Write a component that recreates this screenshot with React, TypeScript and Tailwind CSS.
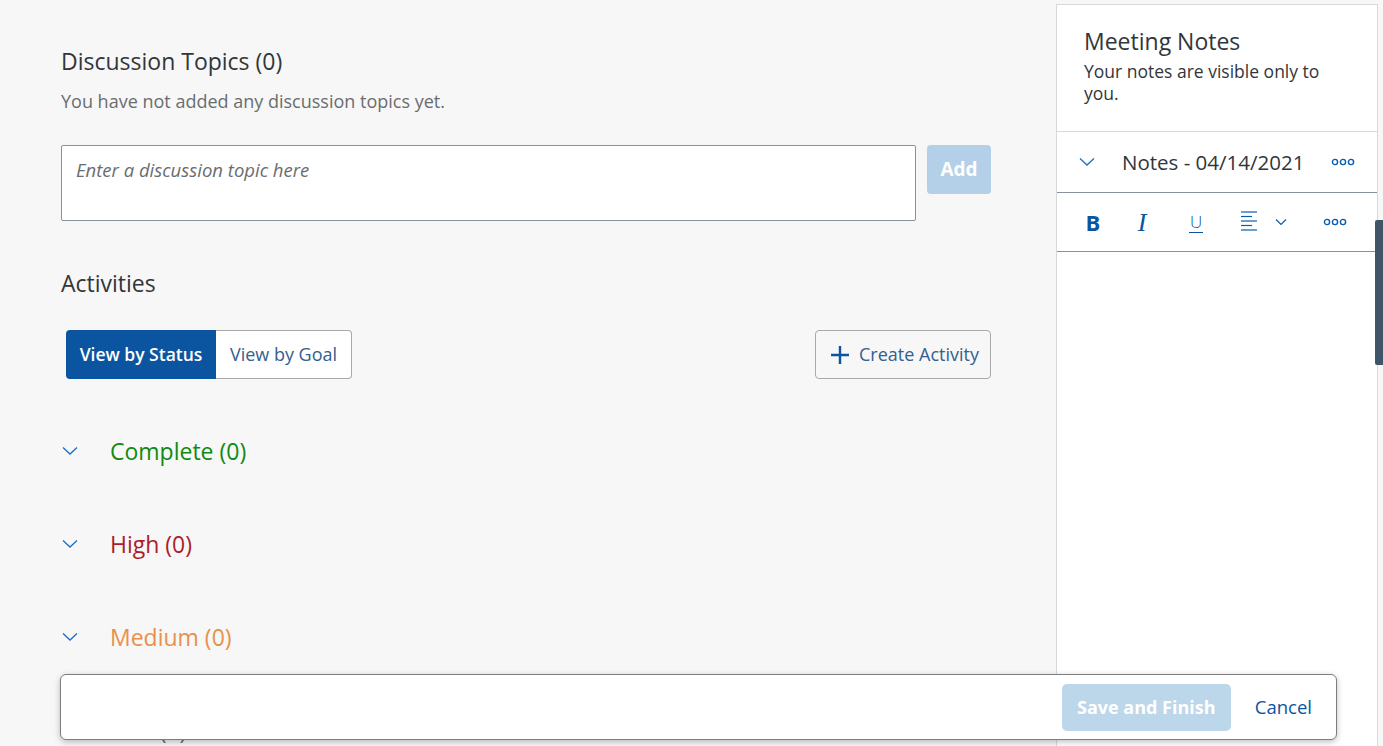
import React from "react";

const font = { fontFamily: '"Open Sans", "Liberation Sans", Arial, sans-serif' };

function Chevron({ className = "" }: { className?: string }) {
  return (
    <svg width="16" height="10" viewBox="0 0 16 10" className={className}>
      <polyline points="1,1.5 8,8 15,1.5" fill="none" stroke="#1b6ec2" strokeWidth="1.3" />
    </svg>
  );
}

function Dots() {
  return (
    <svg width="24" height="8" viewBox="0 0 24 8">
      {[4, 12, 20].map((cx) => (
        <circle key={cx} cx={cx} cy="4" r="2.6" fill="none" stroke="#0a5cae" strokeWidth="1.4" />
      ))}
    </svg>
  );
}

function AlignIcon() {
  return (
    <svg width="18" height="22" viewBox="0 0 18 22">
      {[1, 5.5, 10, 14.5, 19].map((y, i) => (
        <line key={y} x1="1" y1={y} x2={i % 2 ? 12 : 17} y2={y} stroke="#0a5cae" strokeWidth="1.2" />
      ))}
    </svg>
  );
}

function Section({ label, color }: { label: string; color: string }) {
  return (
    <div className="flex items-center h-[28px]">
      <div className="w-[49px] pl-[1px] flex items-center">
        <Chevron />
      </div>
      <span className={`text-[23px] ${color}`}>{label}</span>
    </div>
  );
}

export default function App() {
  return (
    <div className="relative flex h-[746px] w-full overflow-hidden bg-[#f7f7f7]" style={font}>
      {/* main content */}
      <div className="w-[1056px] shrink-0 pl-[61px] pr-[65px] pt-[47px]">
        <h2 className="text-[23px] leading-[28px] text-[#32363a]">Discussion Topics (0)</h2>
        <p className="mt-[15px] text-[18px] leading-[22px] text-[#6a6d70]">
          You have not added any discussion topics yet.
        </p>
        <div className="mt-[33px] flex gap-[11px]">
          <div className="h-[76px] flex-1 rounded-[2px] border border-[#89919a] bg-white px-[14px] pt-[10px]">
            <span className="text-[18.5px] italic text-[#6a6d70]">Enter a discussion topic here</span>
          </div>
          <button className="h-[49px] w-[64px] rounded-[4px] bg-[#b4d0e8] text-[19px] font-bold text-white">
            Add
          </button>
        </div>

        <h2 className="mt-[48px] text-[23px] leading-[28px] text-[#32363a]">Activities</h2>
        <div className="mt-[33px] flex items-center justify-between">
          <div className="ml-[5px] flex h-[49px]">
            <button className="w-[150px] rounded-l-[4px] bg-[#0a54a0] text-[17.5px] font-semibold text-white">
              View by Status
            </button>
            <button className="w-[136px] rounded-r-[4px] border border-l-0 border-[#a9a9a9] bg-white text-[18px] text-[#32608f]">
              View by Goal
            </button>
          </div>
          <button className="flex h-[49px] w-[176px] items-center gap-[9px] rounded-[4px] border border-[#a9a9a9] pl-[14px] text-[18px] text-[#32608f]">
            <svg width="20" height="20" viewBox="0 0 20 20">
              <path d="M10 1v18M1 10h18" stroke="#0a54a0" strokeWidth="2.4" />
            </svg>
            Create Activity
          </button>
        </div>

        <div className="mt-[58px] flex flex-col gap-[65px]">
          <Section label="Complete (0)" color="text-[#108a10]" />
          <Section label="High (0)" color="text-[#aa1e2c]" />
          <Section label="Medium (0)" color="text-[#e8904c]" />
          <Section label="Low (0)" color="text-[#6a6d70]" />
        </div>
      </div>

      {/* meeting notes panel */}
      <div className="mt-[4px] flex w-[322px] shrink-0 flex-col border-l border-t border-r border-[#d9d9d9] bg-white">
        <div className="border-b border-[#d9d9d9] pl-[27px] pt-[21px] pb-[27px]">
          <h3 className="text-[23px] leading-[30px] text-[#32363a]">Meeting Notes</h3>
          <p className="mt-[4px] pr-[30px] text-[17.5px] leading-[22px] text-[#32363a]">
            Your notes are visible only to you.
          </p>
        </div>
        <div className="flex h-[60px] items-center pl-[22px] pr-[22px]">
          <Chevron />
          <span className="ml-[27px] flex-1 text-[20.5px] text-[#32363a]">Notes - 04/14/2021</span>
          <Dots />
        </div>
        <div className="flex h-[60px] items-center border-y border-[#89919a] pl-[16px]">
          <span className="flex w-[40px] justify-center text-[22px] font-bold text-[#0a54a0]">B</span>
          <span
            className="flex w-[58px] justify-center text-[26px] italic text-[#0a54a0]"
            style={{ fontFamily: '"Liberation Serif", serif' }}
          >
            I
          </span>
          <span className="flex w-[50px] justify-center">
            <span className="border-b border-[#0a54a0] px-[1px] text-[17px] font-light leading-[21px] text-[#0a54a0]">U</span>
          </span>
          <span className="flex w-[56px] justify-center">
            <AlignIcon />
          </span>
          <span className="flex w-[8px] justify-center">
            <svg width="12" height="8" viewBox="0 0 12 8" className="shrink-0">
              <polyline points="1,1.5 6,6.5 11,1.5" fill="none" stroke="#0a5cae" strokeWidth="1.2" />
            </svg>
          </span>
          <span className="flex pl-[38px]">
            <Dots />
          </span>
        </div>
        <div className="flex-1" />
      </div>

      {/* scrollbar thumb */}
      <div className="absolute right-0 top-[220px] h-[145px] w-[8px] rounded-l-[2px] bg-[#415569]" />

      {/* floating footer */}
      <div className="absolute left-[60px] top-[674px] flex h-[66px] w-[1277px] items-center justify-end gap-[24px] rounded-[6px] border border-[#7d7d7d] bg-white pr-[24px] shadow-[0_2px_6px_rgba(0,0,0,0.25)]">
        <button className="h-[47px] w-[169px] rounded-[5px] bg-[#bcd6ea] text-[18px] font-bold text-white">
          Save and Finish
        </button>
        <button className="text-[18.5px] text-[#0a54a0]">Cancel</button>
      </div>
    </div>
  );
}
